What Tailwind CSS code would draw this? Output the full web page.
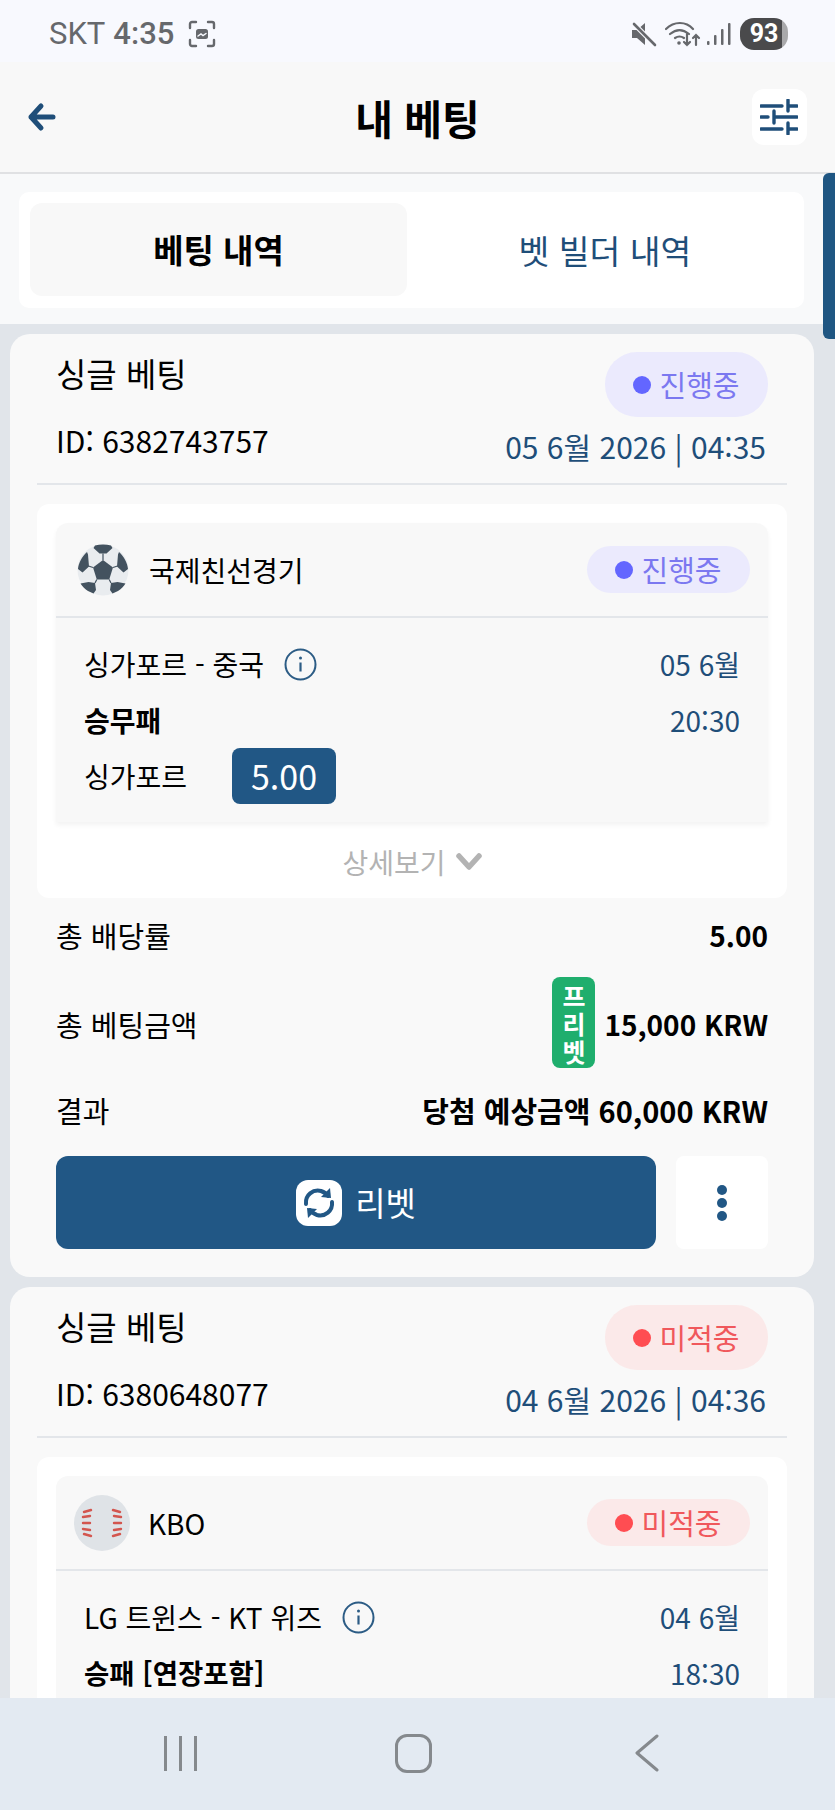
<!doctype html>
<html lang="ko">
<head>
<meta charset="utf-8" />
<title>내 베팅</title>
<script src="https://cdn.jsdelivr.net/npm/@tailwindcss/browser@4"></script>
</head>
<body class="m-0">
<div class="relative w-[835px] h-[1810px] overflow-hidden flex flex-col bg-[#e1e5ea] text-black font-['Noto_Sans_CJK_KR','Noto_Sans',sans-serif]">

  <!-- status bar -->
  <div class="h-[62px] shrink-0 bg-[#f8f9fe] flex items-center justify-between pt-[5px] pl-[49px] pr-[47px] text-[#66686c]">
    <div class="flex items-center">
      <span class="text-[31px] leading-none font-['Roboto',sans-serif]">SKT</span>
      <span class="ml-[8px] text-[31px] leading-none font-medium font-['Roboto',sans-serif]">4:35</span>
      <svg class="ml-[14px]" width="28" height="28" viewBox="0 0 28 28" fill="none" stroke="#66686c" stroke-width="2.4" stroke-linecap="round">
        <path d="M2 8V4a2 2 0 0 1 2-2h4M20 2h4a2 2 0 0 1 2 2v4M26 20v4a2 2 0 0 1-2 2h-4M8 26H4a2 2 0 0 1-2-2v-4" />
        <rect x="8" y="9" width="12" height="10" rx="2.5" fill="#66686c" stroke="none" />
        <path d="M10 16l3-2 2 1.500 3-2" stroke="#f8f9fe" stroke-width="1.500" />
      </svg>
    </div>
    <div class="flex items-center">
      <svg width="26" height="26" viewBox="0 0 26 26" fill="#66686c">
        <path d="M1 9h5l8-7v22l-8-7H1z" />
        <path d="M3 3l21 21" stroke="#f8f9fe" stroke-width="5" />
        <path d="M3 3l21 21" stroke="#66686c" stroke-width="2.600" stroke-linecap="round" />
      </svg>
      <svg class="ml-[8px]" width="36" height="28" viewBox="0 0 36 28" fill="none" stroke="#66686c" stroke-width="2.200" stroke-linecap="round">
        <path d="M1 9c8-8 20-8 27 0M5 14c6-5 13-5 19 0M10 18c3-2 6-2 9 0" />
        <circle cx="14" cy="23" r="1.800" fill="#66686c" stroke="none" />
        <path d="M22 14v11m-3-3l3 3 3-3M31 25V15m-3 3l3-3 3 3" />
      </svg>
      <svg class="ml-[6px]" width="24" height="24" viewBox="0 0 24 24" fill="#66686c">
        <rect x="0" y="19" width="2.500" height="4" rx="1" /><rect x="7" y="13" width="2.500" height="10" rx="1" /><rect x="14" y="7" width="2.500" height="16" rx="1" /><rect x="21" y="1" width="2.500" height="22" rx="1" />
      </svg>
      <div class="ml-[9px] w-[48px] h-[32px] rounded-[14px] bg-[linear-gradient(90deg,#4a4a4c_88%,#a9a9ab_88%)] flex items-center justify-center text-white text-[25px] font-bold leading-none font-['Roboto',sans-serif]">93</div>
    </div>
  </div>

  <!-- header -->
  <div class="h-[112px] shrink-0 bg-[#f8f8f8] border-b-2 border-[#e0e1e3] flex items-center justify-between pl-[27px] pr-[28px]">
    <svg width="30" height="30" viewBox="0 0 30 30" fill="none" stroke="#1f4e79" stroke-width="5" stroke-linecap="round" stroke-linejoin="round">
      <path d="M26 15H4M14 4L4 15l10 11" />
    </svg>
    <div class="ml-[26px] text-[41px] leading-none font-bold">내 베팅</div>
    <div class="w-[55px] h-[56px] rounded-[12px] bg-white flex items-center justify-center">
      <svg width="38" height="36" viewBox="0 0 38 36" fill="none" stroke="#1f4e79" stroke-width="3.400" stroke-linecap="round">
        <path d="M1 7h21M28 7h9M28 1v11M1 18h7M14 18h23M14 12v12M1 30h21M28 30h9M28 24v11" />
      </svg>
    </div>
  </div>

  <!-- tabs -->
  <div class="h-[150px] shrink-0 bg-[#f8f9fa] pt-[18px] pl-[19px] pr-[31px]">
    <div class="h-[116px] bg-white rounded-[10px] p-[11px] flex">
      <div class="w-[377px] h-[93px] rounded-[12px] bg-[#f8f8f8] flex items-center justify-center text-[33px] leading-none font-bold">베팅 내역</div>
      <div class="flex-1 flex items-center justify-center pl-[10px] text-[33.500px] leading-none text-[#1f4e79]">벳 빌더 내역</div>
    </div>
  </div>

  <!-- list -->
  <div class="flex-1 min-h-0 overflow-hidden pt-[10px]">

    <!-- bet 1 -->
    <div class="mx-[10px] w-[804px] bg-[#f9f9f9] rounded-[20px] px-[27px] pt-[18px] pb-[28px]">
      <div class="flex justify-between px-[19px]">
        <div>
          <div class="h-[42px] flex items-center text-[33px] leading-none">싱글 베팅</div>
          <div class="mt-[24px] h-[44px] flex items-center text-[30px] leading-none">ID: 6382743757</div>
        </div>
        <div class="flex flex-col items-end">
          <div class="w-[163px] h-[65px] rounded-[32px] bg-[#ebeafd] flex items-center justify-center gap-[8px] text-[#7b78f0] text-[29px] leading-none">
            <span class="w-[18px] h-[18px] rounded-full bg-[#6366ff]"></span>진행중
          </div>
          <div class="mt-[8px] mr-[2px] h-[42px] flex items-center text-[30px] leading-none text-[#1f4e79]">05 6월 2026 | 04:35</div>
        </div>
      </div>
      <div class="mt-[16px] h-[2px] bg-[#e3e6ea]"></div>

      <div class="mt-[19px] bg-white rounded-[12px] px-[19px] pt-[19px]">
        <div class="bg-[#f8f8f8] rounded-t-[12px] shadow-[0_3px_5px_rgba(0,0,0,0.05)]">
          <div class="h-[95px] border-b-2 border-[#e3e6ea] flex items-center justify-between pl-[21px] pr-[18px]">
            <div class="flex items-center">
              <svg width="52" height="52" viewBox="0 0 52 52">
                <circle cx="26" cy="26" r="25.500" fill="#e9ecef" />
                <path d="M26 16l10 7.500-3.800 12H19.800L16 23.500z" fill="#43525f" />
                <path d="M18 1.500c5-1.200 11-1.200 16 0l1.500 2.500-6 5.500h-7l-6-5.500zM42 8c5 4.500 8.500 11 9 17l-4.500 3.500-6.500-6 1-12zM10 8c-5 4.500-8.500 11-9 17l4.500 3.500 6.500-6-1-12zM11 47c-3-2-5.500-4.500-7.500-7.500l8-1.500 6.500 1 1 7-2.500 3.500zM41 47c3-2 5.500-4.500 7.500-7.500l-8-1.500-6.500 1-1 7 2.500 3.500z" fill="#43525f" />
                <path d="M26 16V9.500M36 23.500l4.500-1.500M32.200 35.500L34 39M19.800 35.500L18 39M16 23.500L11.500 22" stroke="#43525f" stroke-width="1.200" fill="none" />
              </svg>
              <span class="ml-[20px] text-[28px] leading-none">국제친선경기</span>
            </div>
            <div class="w-[163px] h-[47px] rounded-[24px] bg-[#ebeafd] flex items-center justify-center gap-[8px] text-[#7b78f0] text-[29px] leading-none">
              <span class="w-[18px] h-[18px] rounded-full bg-[#6366ff]"></span>진행중
            </div>
          </div>
          <div class="px-[28px] pt-[24px] pb-[18px]">
            <div class="h-[44px] flex items-center justify-between">
              <div class="flex items-center text-[28px] leading-none">
                싱가포르 - 중국
                <svg class="ml-[20px]" width="33" height="33" viewBox="0 0 33 33" fill="none" stroke="#2c5c85" stroke-width="2">
                  <circle cx="16.500" cy="16.500" r="15" /><path d="M16.500 14.500v9" stroke-width="2.200" /><circle cx="16.500" cy="10" r="1.500" fill="#2c5c85" stroke="none" />
                </svg>
              </div>
              <span class="text-[28px] leading-none text-[#1f4e79]">05 6월</span>
            </div>
            <div class="mt-[12px] h-[44px] flex items-center justify-between">
              <span class="text-[28px] leading-none font-bold">승무패</span>
              <span class="text-[28px] leading-none text-[#1f4e79]">20:30</span>
            </div>
            <div class="mt-[6px] h-[56px] flex items-center">
              <span class="w-[148px] text-[28px] leading-none">싱가포르</span>
              <span class="w-[104px] h-[56px] rounded-[8px] bg-[#215785] text-white text-[34px] leading-none flex items-center justify-center">5.00</span>
            </div>
          </div>
        </div>
        <div class="h-[76px] pt-[4px] flex items-center justify-center gap-[10px] text-[#b3b3b3] text-[28px] leading-none">
          상세보기
          <svg width="26" height="18" viewBox="0 0 26 18" fill="none" stroke="#b3b3b3" stroke-width="5.500" stroke-linecap="round" stroke-linejoin="round"><path d="M3 3l10 11L23 3" /></svg>
        </div>
      </div>

      <div class="px-[19px]">
        <div class="mt-[15px] h-[44px] flex items-center justify-between text-[29px] leading-none">
          <span>총 배당률</span><span class="text-[28px] font-bold">5.00</span>
        </div>
        <div class="mt-[20px] h-[91px] flex items-center justify-between text-[29px] leading-none">
          <span class="mt-[3px]">총 베팅금액</span>
          <div class="flex items-center">
            <span class="w-[43px] h-[91px] rounded-[8px] bg-[#1fae6d] text-white text-[25px] leading-[28px] font-bold px-[9px] break-all text-center flex items-center">프리벳</span>
            <span class="ml-[9px] mt-[3px] text-[28px] font-semibold">15,000 KRW</span>
          </div>
        </div>
        <div class="mt-[20px] h-[44px] flex items-center justify-between text-[29px] leading-none">
          <span>결과</span><span class="font-semibold">당첨 예상금액 60,000 KRW</span>
        </div>
        <div class="mt-[24px] flex justify-between">
          <div class="w-[600px] h-[93px] rounded-[12px] bg-[#215785] flex items-center justify-center gap-[13px] text-white text-[33px] leading-none">
            <span class="w-[46px] h-[46px] rounded-[12px] bg-white flex items-center justify-center">
              <svg width="34" height="34" viewBox="0 0 34 34" fill="none" stroke="#215785" stroke-width="4" stroke-linecap="round">
                <path d="M4 18C3 9 11 3 19 5c3 1 5 2 7 5" />
                <path d="M30 16c1 9-7 15-15 13-3-1-5-2-7-5" />
                <path d="M28 2l1 10-10-1z" fill="#215785" stroke="none" />
                <path d="M6 32l-1-10 10 1z" fill="#215785" stroke="none" />
              </svg>
            </span>
            리벳
          </div>
          <div class="w-[92px] h-[93px] rounded-[8px] bg-white flex flex-col items-center justify-center gap-[3px]">
            <span class="w-[10px] h-[10px] rounded-full bg-[#215785]"></span>
            <span class="w-[10px] h-[10px] rounded-full bg-[#215785]"></span>
            <span class="w-[10px] h-[10px] rounded-full bg-[#215785]"></span>
          </div>
        </div>
      </div>
    </div>

    <!-- bet 2 -->
    <div class="mt-[10px] mx-[10px] w-[804px] bg-[#f9f9f9] rounded-[20px] px-[27px] pt-[18px] pb-[28px]">
      <div class="flex justify-between px-[19px]">
        <div>
          <div class="h-[42px] flex items-center text-[33px] leading-none">싱글 베팅</div>
          <div class="mt-[24px] h-[44px] flex items-center text-[30px] leading-none">ID: 6380648077</div>
        </div>
        <div class="flex flex-col items-end">
          <div class="w-[163px] h-[65px] rounded-[32px] bg-[#fbe9e9] flex items-center justify-center gap-[8px] text-[#f0585c] text-[29px] leading-none">
            <span class="w-[18px] h-[18px] rounded-full bg-[#ff4d52]"></span>미적중
          </div>
          <div class="mt-[8px] mr-[2px] h-[42px] flex items-center text-[30px] leading-none text-[#1f4e79]">04 6월 2026 | 04:36</div>
        </div>
      </div>
      <div class="mt-[16px] h-[2px] bg-[#e3e6ea]"></div>

      <div class="mt-[19px] bg-white rounded-[12px] px-[19px] pt-[19px]">
        <div class="bg-[#f8f8f8] rounded-t-[12px]">
          <div class="h-[95px] border-b-2 border-[#e3e6ea] flex items-center justify-between pl-[18px] pr-[18px]">
            <div class="flex items-center">
              <svg width="56" height="56" viewBox="0 0 56 56" fill="none">
                <circle cx="28" cy="28" r="28" fill="#dfe3e7" />
                <path d="M10 17l7-2M9 22l7-1M9 28h7M9 34l7 1M10 39l7 2M39 15l7 2M40 21l7 1M40 28h7M40 35l7-1M39 41l7-2" stroke="#d3564f" stroke-width="2.400" stroke-linecap="round" />
              </svg>
              <span class="ml-[18px] text-[28px] leading-none">KBO</span>
            </div>
            <div class="w-[163px] h-[47px] rounded-[24px] bg-[#fbe9e9] flex items-center justify-center gap-[8px] text-[#f0585c] text-[29px] leading-none">
              <span class="w-[18px] h-[18px] rounded-full bg-[#ff4d52]"></span>미적중
            </div>
          </div>
          <div class="px-[28px] pt-[24px] pb-[18px]">
            <div class="h-[44px] flex items-center justify-between">
              <div class="flex items-center text-[28px] leading-none">
                LG 트윈스 - KT 위즈
                <svg class="ml-[20px]" width="33" height="33" viewBox="0 0 33 33" fill="none" stroke="#2c5c85" stroke-width="2">
                  <circle cx="16.500" cy="16.500" r="15" /><path d="M16.500 14.500v9" stroke-width="2.200" /><circle cx="16.500" cy="10" r="1.500" fill="#2c5c85" stroke="none" />
                </svg>
              </div>
              <span class="text-[28px] leading-none text-[#1f4e79]">04 6월</span>
            </div>
            <div class="mt-[12px] h-[44px] flex items-center justify-between">
              <span class="text-[27.500px] leading-none font-bold">승패 [연장포함]</span>
              <span class="text-[28px] leading-none text-[#1f4e79]">18:30</span>
            </div>
          </div>
        </div>
      </div>
    </div>
  </div>

  <!-- scrollbar -->
  <div class="absolute right-0 top-[173px] w-[12px] h-[166px] rounded-l-[6px] bg-[#1f5682]"></div>

  <!-- android nav -->
  <div class="absolute left-0 right-0 bottom-0 h-[112px] bg-[#e3eaf2] flex items-start text-[#85898d]">
    <div class="mt-[38px] w-[360px] flex justify-end pr-[163px] gap-[12px]">
      <span class="w-[3px] h-[35px] bg-[#85898d]"></span>
      <span class="w-[3px] h-[35px] bg-[#85898d]"></span>
      <span class="w-[3px] h-[35px] bg-[#85898d]"></span>
    </div>
    <div class="mt-[36px] ml-[35px] w-[37px] h-[39px] rounded-[12px] border-[3px] border-[#85898d]"></div>
    <svg class="mt-[36px] ml-[202px]" width="26" height="38" viewBox="0 0 26 38" fill="none" stroke="#85898d" stroke-width="3" stroke-linecap="round" stroke-linejoin="round"><path d="M23 2L3 19l20 17" /></svg>
  </div>
</div>
</body>
</html>
